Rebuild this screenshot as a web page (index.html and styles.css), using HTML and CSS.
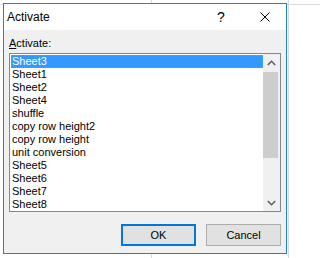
FILE: index.html
```html
<!DOCTYPE html>
<html>
<head>
<meta charset="utf-8">
<link rel="stylesheet" href="styles.css">
</head>
<body>
<div class="dialog">
  <div class="titlebar">
    <span class="title">Activate</span>
    <span class="tb-btn help">?</span>
    <span class="tb-btn close">
      <svg width="10" height="10" viewBox="0 0 10 10"><path d="M0.5 0.5 L9.5 9.5 M9.5 0.5 L0.5 9.5" stroke="#000" stroke-width="1" fill="none"/></svg>
    </span>
  </div>
  <div class="content">
    <div class="label"><span class="u">A</span>ctivate:</div>
    <div class="listbox">
      <ul class="items">
        <li class="sel">Sheet3</li>
        <li>Sheet1</li>
        <li>Sheet2</li>
        <li>Sheet4</li>
        <li>shuffle</li>
        <li>copy row height2</li>
        <li>copy row height</li>
        <li>unit conversion</li>
        <li>Sheet5</li>
        <li>Sheet6</li>
        <li>Sheet7</li>
        <li>Sheet8</li>
      </ul>
      <div class="scrollbar">
        <div class="arrow"><svg width="9" height="6" viewBox="0 0 9 6"><path d="M0.8 5 L4.5 1.3 L8.2 5" stroke="#606060" stroke-width="1.6" fill="none"/></svg></div>
        <div class="track"><div class="thumb"></div></div>
        <div class="arrow"><svg width="9" height="6" viewBox="0 0 9 6"><path d="M0.8 1 L4.5 4.7 L8.2 1" stroke="#606060" stroke-width="1.6" fill="none"/></svg></div>
      </div>
    </div>
    <div class="buttons">
      <button class="btn default">OK</button>
      <button class="btn">Cancel</button>
    </div>
  </div>
</div>
</body>
</html>
```
FILE: styles.css
```css
html, body {
  margin: 0;
  padding: 0;
}
body {
  width: 290px;
  height: 258px;
  overflow: hidden;
  font-family: "Liberation Sans", Arial, sans-serif;
  color: #000;
  background-color: #fff;
  background-image:
    linear-gradient(to right, transparent 151px, #dadada 151px, #dadada 152px, transparent 152px),
    linear-gradient(to right, transparent 288px, #dadada 288px, #dadada 289px, transparent 289px),
    linear-gradient(to bottom, transparent 4px, #dadada 4px, #dadada 5px, transparent 5px);
  display: flow-root;
}
.dialog {
  box-sizing: border-box;
  margin: 3px 0 0 3px;
  width: 284px;
  height: 251px;
  border: 1px solid #1883d7;
  background: #f0f0f0;
  display: flex;
  flex-direction: column;
}
.titlebar {
  height: 26px;
  background: #fff;
  display: flex;
  align-items: stretch;
  flex: none;
}
.title {
  flex: 1;
  padding-left: 3px;
  font-size: 12px;
  line-height: 26px;
}
.tb-btn {
  display: flex;
  align-items: center;
  justify-content: center;
}
.help {
  width: 46px;
  font-size: 14px;
  line-height: 26px;
}
.close {
  width: 42px;
}
.content {
  flex: 1;
  padding: 7px 5px 0 5px;
}
.label {
  font-size: 11px;
  line-height: 13px;
  height: 13px;
  margin-bottom: 3px;
}
.u {
  text-decoration: underline;
}
.listbox {
  box-sizing: border-box;
  height: 159px;
  border: 1px solid #828790;
  background: #fff;
  display: flex;
}
.items {
  flex: 1;
  list-style: none;
  margin: 0;
  padding: 1px 0 0 1px;
  overflow: hidden;
}
.items li {
  height: 13px;
  line-height: 13px;
  font-size: 11px;
  padding-left: 1px;
  white-space: nowrap;
}
.items li.sel {
  background: #3399ff;
  color: #fff;
  outline: 1px dotted #c8844a;
  outline-offset: -1px;
}
.scrollbar {
  width: 17px;
  display: flex;
  flex-direction: column;
  background: #f0f0f0;
}
.arrow {
  height: 17px;
  display: flex;
  align-items: center;
  justify-content: center;
  flex: none;
}
.track {
  flex: 1;
  padding-top: 1px;
}
.thumb {
  width: 15px;
  height: 86px;
  background: #cdcdcd;
}
.buttons {
  display: flex;
  justify-content: flex-end;
  gap: 10px;
  margin-top: 12px;
}
.btn {
  box-sizing: border-box;
  width: 75px;
  height: 22px;
  padding: 0;
  margin: 0;
  font-family: "Liberation Sans", Arial, sans-serif;
  font-size: 11px;
  color: #000;
  background: #e1e1e1;
  border: 1px solid #adadad;
  border-radius: 0;
}
.btn.default {
  border: 2px solid #0078d7;
}
```
